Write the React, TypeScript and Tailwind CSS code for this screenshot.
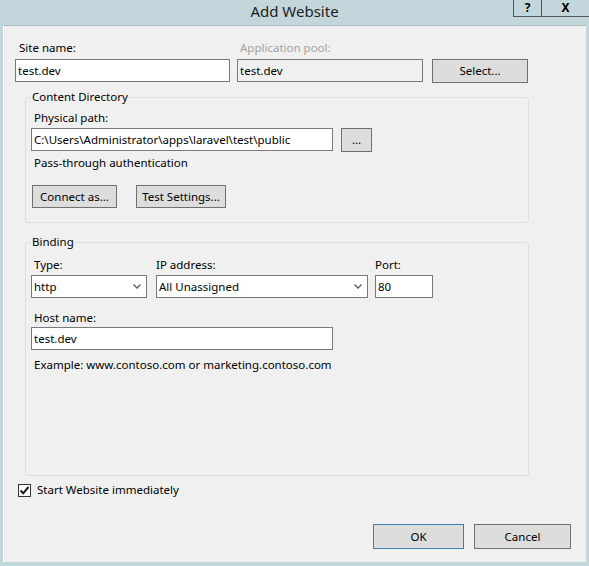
import React from "react";

const font = { fontFamily: '"Noto Sans", "Segoe UI", "Liberation Sans", sans-serif' };

function TextBox({ value, className = "" }: { value: string; className?: string }) {
  return (
    <div
      className={`h-[23px] border border-[#7a7a7a] bg-white px-[2px] flex items-center text-[11.5px] text-black ${className}`}
    >
      {value}
    </div>
  );
}

function Button({ label, className = "" }: { label: string; className?: string }) {
  return (
    <div
      className={`flex items-center justify-center border border-[#707070] bg-[#dddddd] text-[11.5px] text-black ${className}`}
    >
      {label}
    </div>
  );
}

function Chevron() {
  return (
    <svg width="8" height="5" viewBox="0 0 8 5" className="text-[#5a5a5a]">
      <path d="M0.5 0.5 L4 4 L7.5 0.5" fill="none" stroke="currentColor" strokeWidth="1.3" />
    </svg>
  );
}

function Select({ value, className = "" }: { value: string; className?: string }) {
  return (
    <div
      className={`h-[23px] border border-[#7a7a7a] bg-white pl-[2px] pr-[5px] flex items-center justify-between text-[11.5px] text-black ${className}`}
    >
      <span>{value}</span>
      <Chevron />
    </div>
  );
}

function Label({ children, className = "" }: { children: React.ReactNode; className?: string }) {
  return <div className={`h-[16px] leading-[16px] text-[11.5px] text-black ${className}`}>{children}</div>;
}

export default function App() {
  return (
    <div className="w-[589px] h-[566px] bg-[#c3d6db] flex flex-col" style={font}>
      {/* title bar */}
      <div className="h-[25px] flex items-start relative">
        <div className="flex-1 text-center text-[15px] leading-[23px] text-[#1e1e1e]">Add Website</div>
        <div className="absolute right-0 top-0 flex border-l border-b border-[#555] h-[17px]">
          <div className="w-[28px] flex items-center justify-center text-[12px] leading-[14px] font-bold text-black border-r border-[#555]">
            ?
          </div>
          <div className="w-[47px] flex items-center justify-center text-[12px] leading-[14px] font-bold text-black">X</div>
        </div>
      </div>

      {/* client area */}
      <div className="ml-[3px] mr-[3px] mb-[4px] flex-1 bg-[#f0f0f0] border-t border-[#a9bcc2] border-l border-l-white flex flex-col pl-[11px] pt-[14px] text-[11.5px]">
        {/* top row */}
        <div className="flex items-end">
          <div className="w-[215px]">
            <Label className="pl-[4px]">Site name:</Label>
            <TextBox value="test.dev" className="mt-[3px]" />
          </div>
          <div className="w-[186px] ml-[7px]">
            <Label className="pl-[3px] !text-[#a3a3a3]">Application pool:</Label>
            <TextBox value="test.dev" className="mt-[3px] !bg-[#f0f0f0]" />
          </div>
          <Button label="Select..." className="w-[96px] h-[24px] ml-[9px] mb-[-1px]" />
        </div>

        {/* content directory */}
        <fieldset className="mt-[7px] ml-[10px] w-[504px] border border-[#d5dfe5] rounded-[3px] pl-[5px] pb-[14px]">
          <legend className="px-[1px] ml-[0px] text-[11.5px] leading-[16px] text-black">Content Directory</legend>
          <Label className="pl-[3px] mt-[5px]">Physical path:</Label>
          <div className="flex items-start mt-[2px]">
            <TextBox value="C:\Users\Administrator\apps\laravel\test\public" className="w-[302px]" />
            <Button label="..." className="w-[31px] h-[24px] ml-[8px]" />
          </div>
          <Label className="pl-[3px] mt-[3px]">Pass-through authentication</Label>
          <div className="flex mt-[14px] ml-[1px]">
            <Button label="Connect as..." className="w-[85px] h-[23px]" />
            <Button label="Test Settings..." className="w-[90px] h-[23px] ml-[19px]" />
          </div>
        </fieldset>

        {/* binding */}
        <fieldset className="mt-[11px] ml-[10px] w-[504px] h-[242px] border border-[#d5dfe5] rounded-[3px] pl-[5px]">
          <legend className="px-[1px] text-[11.5px] leading-[16px] text-black">Binding</legend>
          <div className="flex mt-[7px]">
            <div className="w-[116px]">
              <Label className="pl-[3px]">Type:</Label>
              <Select value="http" className="mt-[2px]" />
            </div>
            <div className="w-[212px] ml-[9px]">
              <Label className="pl-[0px]">IP address:</Label>
              <Select value="All Unassigned" className="mt-[2px]" />
            </div>
            <div className="w-[58px] ml-[7px]">
              <Label>Port:</Label>
              <TextBox value="80" className="mt-[2px]" />
            </div>
          </div>
          <Label className="pl-[3px] mt-[12px]">Host name:</Label>
          <TextBox value="test.dev" className="w-[302px] mt-[1px]" />
          <Label className="pl-[3px] mt-[7px]">Example: www.contoso.com or marketing.contoso.com</Label>
        </fieldset>

        {/* checkbox */}
        <div className="flex items-center mt-[6px] ml-[3px]">
          <div className="w-[13px] h-[13px] border border-[#333] bg-white flex items-center justify-center">
            <svg width="11" height="11" viewBox="0 0 11 11">
              <path d="M1.5 5.5 L4.2 8.3 L9.5 2" fill="none" stroke="#1b1b1b" strokeWidth="2" />
            </svg>
          </div>
          <span className="ml-[6px] text-[11.5px] leading-[16px] text-black">Start Website immediately</span>
        </div>

        {/* dialog buttons */}
        <div className="flex mt-[26px] ml-[358px]">
          <Button label="OK" className="w-[91px] h-[25px] !border-[#3c7fb1]" />
          <Button label="Cancel" className="w-[97px] h-[25px] ml-[10px]" />
        </div>
      </div>
    </div>
  );
}
